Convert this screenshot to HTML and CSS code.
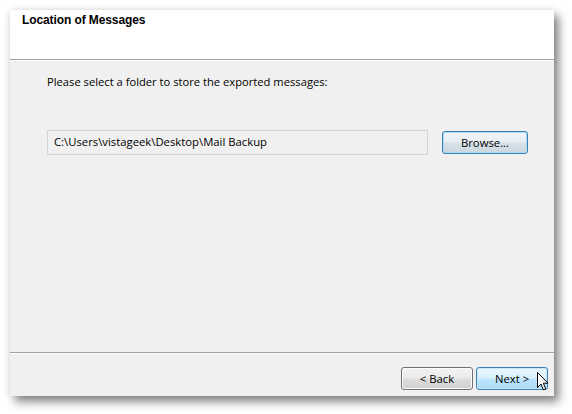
FILE: index.html
```html
<!DOCTYPE html>
<html>
<head>
<meta charset="utf-8">
<link rel="stylesheet" href="styles.css">
</head>
<body>
<div class="window">
  <div class="header">
    <div class="title">Location of Messages</div>
  </div>
  <div class="content">
    <p class="prompt">Please select a folder to store the exported messages:</p>
    <div class="path-row">
      <div class="path-field">C:\Users\vistageek\Desktop\Mail Backup</div>
      <button class="btn btn-browse">Browse...</button>
    </div>
  </div>
  <div class="footer">
    <button class="btn btn-nav">&lt; Back</button>
    <button class="btn btn-nav btn-hot">Next &gt;</button>
    <svg class="cursor" width="12" height="19" viewBox="0 0 12 19">
      <path d="M0.5 0.5 L0.5 15.5 L4 12 L6.5 17.8 L8.8 16.8 L6.3 11.2 L11 11.2 Z" fill="#fff" stroke="#000" stroke-width="1" stroke-linejoin="miter"/>
    </svg>
  </div>
</div>
</body>
</html>
```
FILE: styles.css
```css
html, body {
  margin: 0;
  padding: 0;
  background: #ffffff;
}
body {
  font-family: "Open Sans", "Liberation Sans", sans-serif;
  font-size: 12px;
  color: #000;
  width: 572px;
  height: 414px;
  overflow: hidden;
}
.window {
  margin: 10px 0 0 10px;
  width: 544px;
  height: 386px;
  background: #f0f0f0;
  display: flex;
  flex-direction: column;
  box-shadow: 5px 6px 9px rgba(0,0,0,0.45), 0 0 8px rgba(0,0,0,0.12);
}
.header {
  height: 50px;
  background: #ffffff;
  border-bottom: 1px solid #a0a0a0;
  box-shadow: 0 1px 0 #ffffff;
  padding: 3px 0 0 12px;
  box-sizing: border-box;
}
.title {
  font-family: "Liberation Sans", Arial, sans-serif;
  font-weight: bold;
  font-size: 12px;
  letter-spacing: -0.1px;
}
.content {
  flex: 1;
  padding: 0 26px 0 37px;
}
.prompt {
  margin: 14px 0 0 0;
  font-size: 11.2px;
  line-height: 16px;
}
.path-row {
  display: flex;
  align-items: center;
  margin-top: 40px;
}
.path-field {
  width: 381px;
  height: 25px;
  box-sizing: border-box;
  border: 1px solid #d5d5d5;
  background: #f0f0f0;
  padding: 3px 0 0 6px;
  font-size: 11.3px;
  line-height: 16px;
}
.btn {
  font-family: "Open Sans", "Liberation Sans", sans-serif;
  font-size: 11.3px;
  color: #000;
  height: 23px;
  padding: 0;
  border-radius: 3px;
  border: 1px solid #707070;
  background: linear-gradient(#f2f2f2 0%, #ebebeb 48%, #dddddd 52%, #cfcfcf 100%);
  box-shadow: inset 0 0 0 1px #fbfbfb;
}
.btn-browse {
  margin-left: 14px;
  width: 86px;
  border-color: #3c7fb1;
  background: linear-gradient(#f2f5f8 0%, #e7edf2 48%, #d7e1e8 52%, #cbd7e0 100%);
  box-shadow: inset 0 0 0 1px #a8dbf5;
}
.footer {
  height: 44px;
  border-top: 1px solid #a0a0a0;
  box-shadow: inset 0 1px 0 #ffffff;
  display: flex;
  justify-content: flex-end;
  align-items: flex-start;
  padding: 14px 6px 0 0;
  box-sizing: border-box;
  gap: 3px;
  position: relative;
}
.btn-nav {
  width: 72px;
}
.btn-hot {
  border-color: #3c7fb1;
  background: linear-gradient(#eaf6fd 0%, #d9f0fc 48%, #bee6fd 52%, #a7d9f5 100%);
  box-shadow: inset 0 0 0 1px #c6e8fa;
}
.cursor {
  position: absolute;
  left: 527px;
  top: 19px;
}
```
